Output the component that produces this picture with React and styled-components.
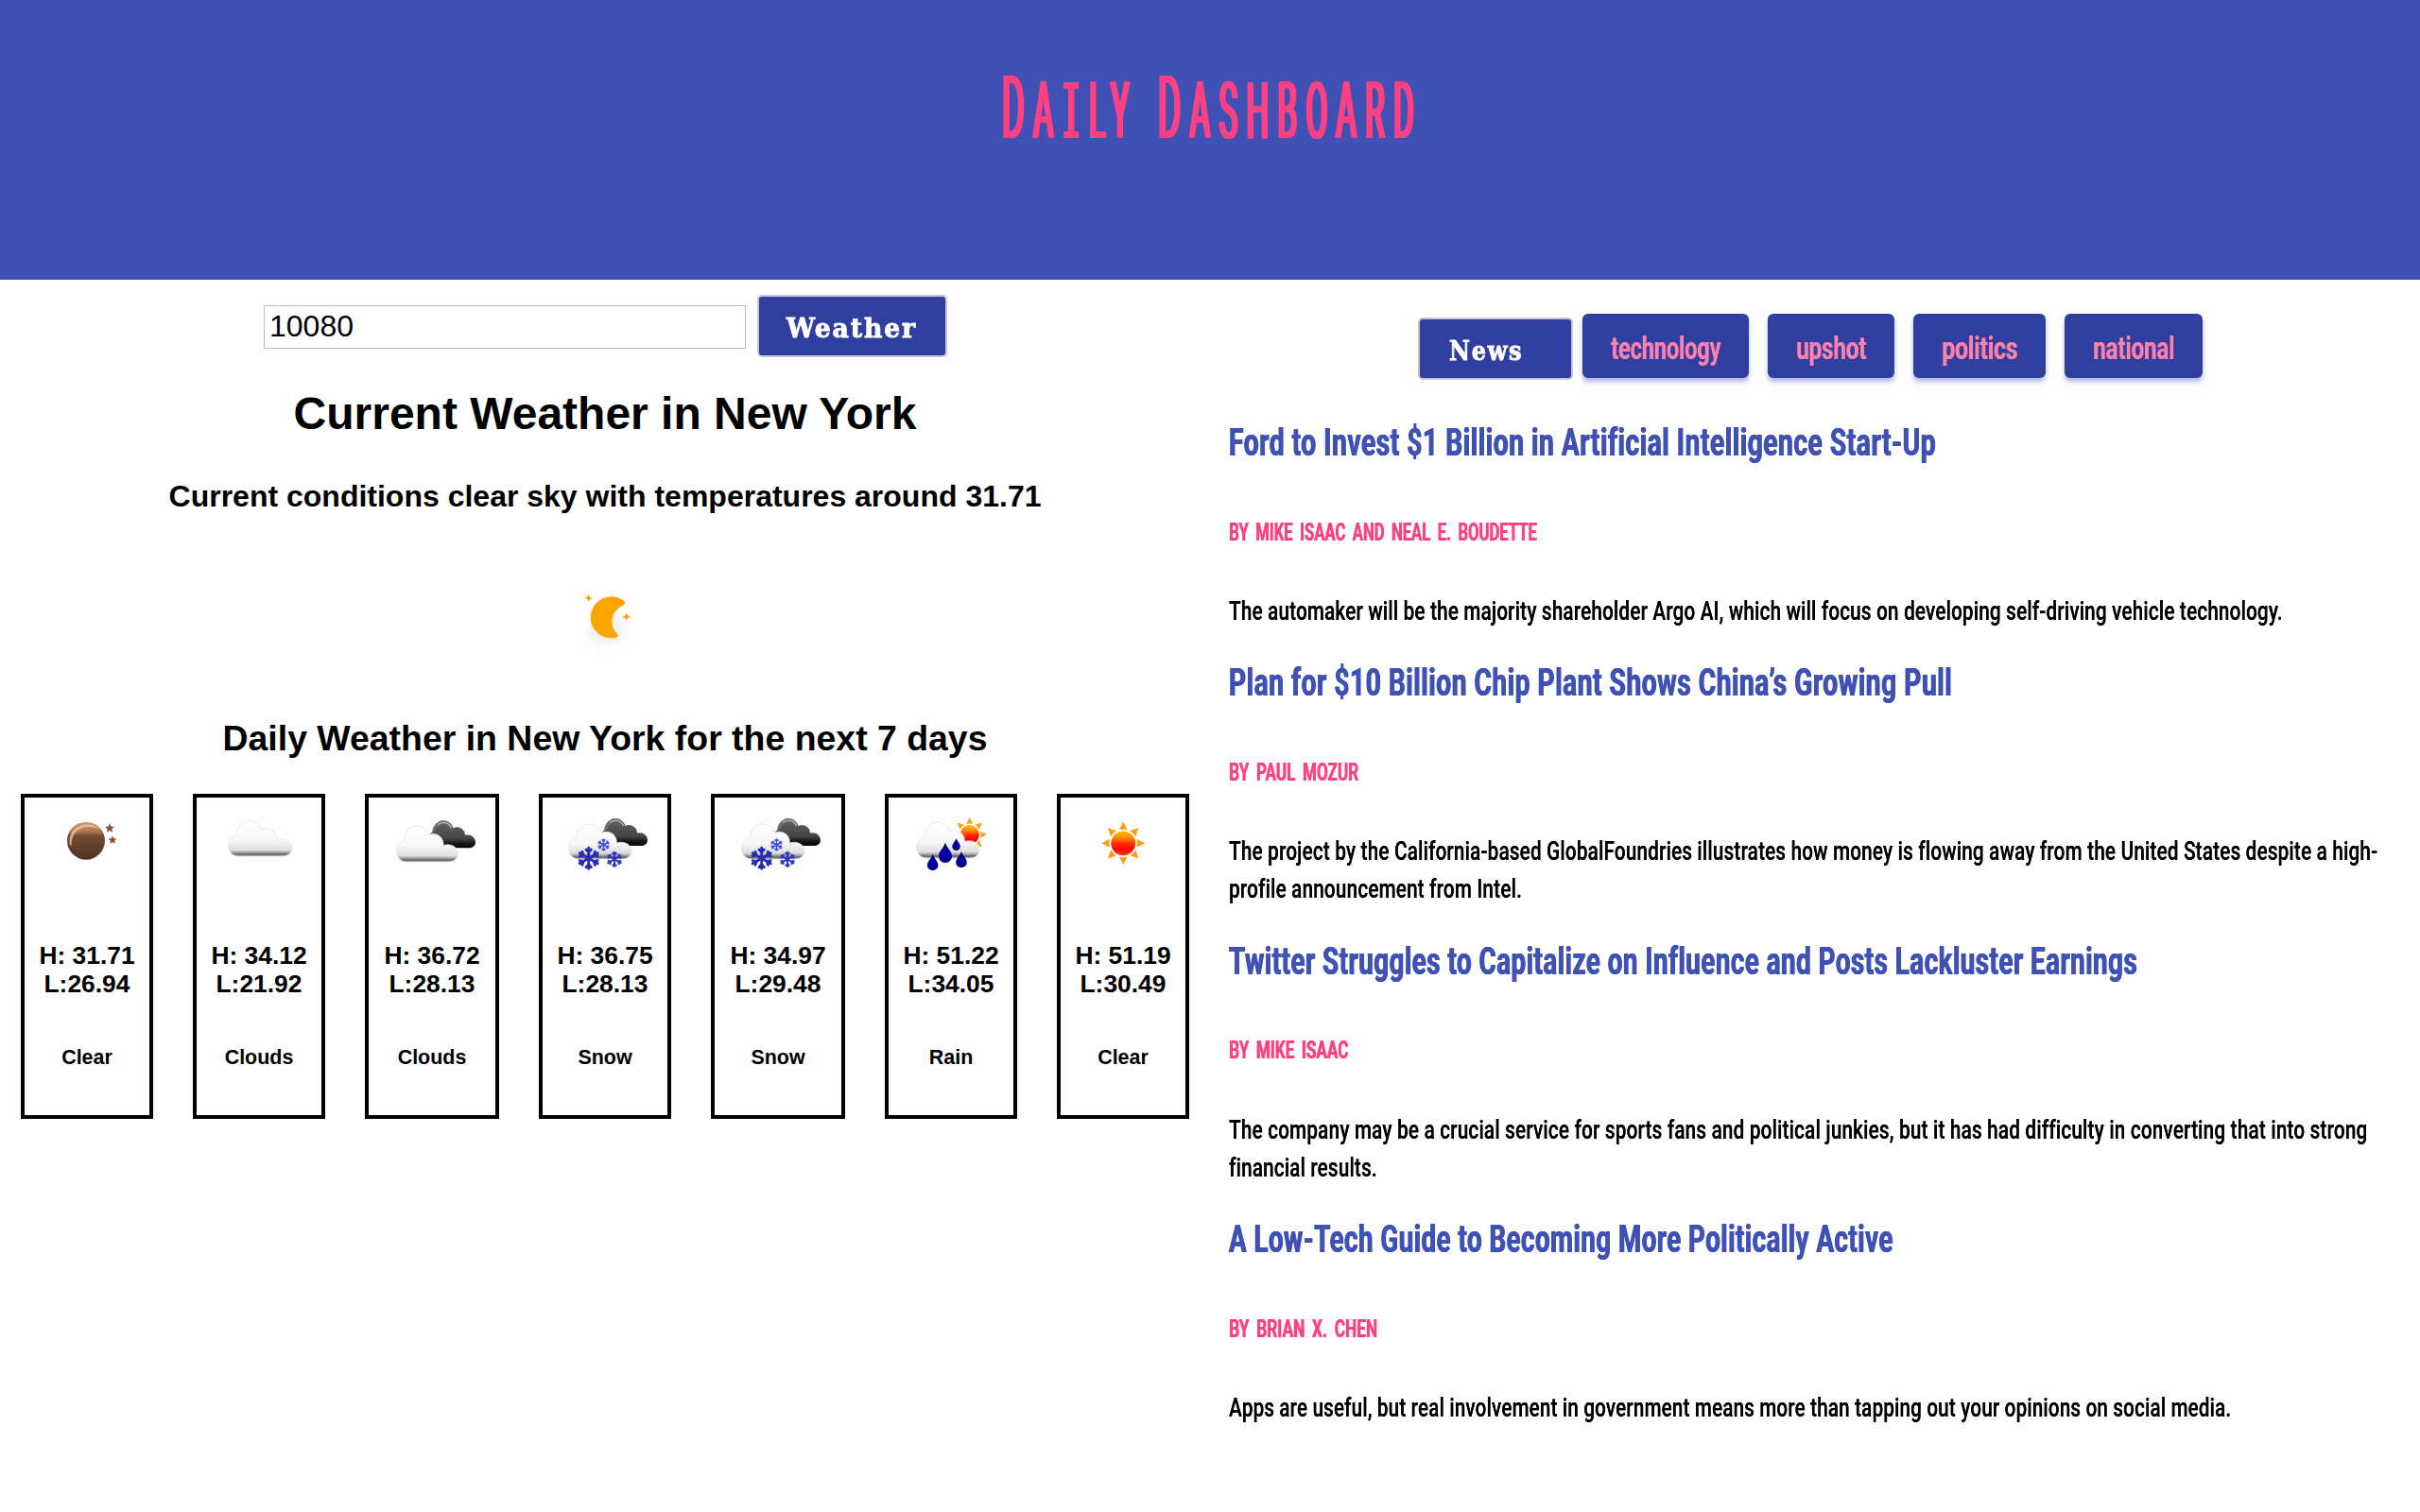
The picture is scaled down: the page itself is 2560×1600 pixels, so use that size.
import React, { useLayoutEffect, useRef, useState } from "react";
import styled, { createGlobalStyle } from "styled-components";

const GlobalStyle = createGlobalStyle`
  * { box-sizing: border-box; }
  body {
    margin: 0;
    background: #fefefe;
    color: #000;
    font-family: "Liberation Sans", Arial, sans-serif;
  }
  h1, h2, h3, h4, p { margin: 0; }
`;

/* ---- condensed text: squeezes a line to the requested measure ---- */

const FitBox = styled.span`
  display: inline-block;
  white-space: nowrap;
  text-align: left;
  vertical-align: top;
`;

const FitInner = styled.span`
  display: inline-block;
  transform-origin: 0 50%;
`;

function Fit({ width, children }) {
  const ref = useRef(null);
  const [scale, setScale] = useState(1);
  useLayoutEffect(() => {
    setScale(width / ref.current.offsetWidth);
  }, [width]);
  return (
    <FitBox style={{ width }}>
      <FitInner ref={ref} style={scale === 1 ? undefined : { transform: `scaleX(${scale})` }}>
        {children}
      </FitInner>
    </FitBox>
  );
}

/* ---- header ---- */

const Header = styled.header`
  height: 296px;
  padding-top: 59px;
  background: #3f51b5;
  display: flex;
  justify-content: center;
`;

const Title = styled.h1`
  display: flex;
  gap: 21px;
  padding-left: 5px;
  height: 120px;
  line-height: 112px;
  font-family: Roboto, "Open Sans", sans-serif;
  font-weight: 400;
  font-size: 83px;
  letter-spacing: 24px;
  color: #ff4081;
  text-shadow: 4px 0 #ff4081, -4px 0 #ff4081, 2px 0 #ff4081, -2px 0 #ff4081;
`;

const Initial = styled.span`
  font-size: 93px;
`;

const Slab = styled.span`
  font-family: "DejaVu Sans Mono", monospace;
  font-size: 81px;
`;

/* ---- layout ---- */

const Main = styled.main`
  display: grid;
  grid-template-columns: 1280px 1280px;
`;

const WeatherPane = styled.section`
  display: flex;
  flex-direction: column;
  align-items: center;
`;

const NewsPane = styled.section`
  padding: 36px 20px 0;
  overflow-x: clip;
`;

const SearchForm = styled.form`
  display: flex;
  align-items: center;
  align-self: flex-start;
  gap: 12px;
  height: 66px;
  margin: 16px 0 0 279px;
`;

const ZipInput = styled.input`
  width: 510px;
  height: 46px;
  margin-top: 2px;
  padding: 0 5px 1px;
  border: 1px solid #bdbdbd;
  background: #fff;
  font: 32px "Liberation Sans", Arial, sans-serif;
  color: #000;
  outline: none;
`;

const ActionButton = styled.button`
  width: ${(p) => p.$width}px;
  height: 66px;
  padding: 6px 0 0 ${(p) => p.$inset}px;
  border: 2px solid #c5c5cb;
  border-radius: 5px;
  background: #303f9f;
  color: #fff;
  text-align: left;
  font: bold 28px/40px "DejaVu Serif", serif;
  letter-spacing: 2px;
  -webkit-text-stroke: 0.9px #fff;
`;

const CurrentHeading = styled.h1`
  margin-top: 32px;
  font-size: 48px;
  line-height: 56px;
`;

const Conditions = styled.h3`
  margin: 41px 0 57px;
  font-size: 32px;
  line-height: 36px;
`;

const DailyHeading = styled.h2`
  margin: 39px 0 37px;
  font-size: 37.44px;
  line-height: 44px;
`;

const Days = styled.div`
  display: grid;
  grid-template-columns: 140px 140px 142px 140px 142px 140px 140px;
  gap: 42px;
`;

const DayCard = styled.div`
  height: 344px;
  border: 4px solid #000;
  display: flex;
  flex-direction: column;
  align-items: center;
`;

const Temps = styled.div`
  margin-top: 32px;
  font-weight: bold;
  font-size: 26.4px;
  line-height: 30px;
  text-align: center;
  white-space: nowrap;
`;

const Label = styled.div`
  margin-top: 51px;
  font-weight: bold;
  font-size: 21.44px;
  line-height: 24px;
`;

/* ---- news ---- */

const NewsBar = styled.nav`
  display: flex;
  align-items: flex-start;
  margin-left: 200px;
  height: 106px;
`;

const NewsButton = styled(ActionButton)`
  margin: 4px 10px 0 0;
`;

const Tab = styled.button`
  height: 68px;
  margin-right: 20px;
  padding: 5px 30px 0;
  border: 0;
  border-radius: 6px;
  background: #303f9f;
  box-shadow: 0 4px 5px rgba(63, 81, 181, 0.4);
  color: #ff80ab;
  font: 600 33px/56px Roboto, sans-serif;
  text-shadow: 0.9px 0 #ff80ab;
`;

const Article = styled.article`
  margin-bottom: 25.6px;
`;

const Headline = styled.h2`
  height: 60px;
  font: 700 41.5px/60px Roboto, sans-serif;
  letter-spacing: 0.8px;
  color: #3f51b5;
  text-shadow: 0.7px 0 #3f51b5, -0.7px 0 #3f51b5;
`;

const Byline = styled.h4`
  height: 30px;
  margin: 50.5px 0 48.3px;
  font: 700 25.2px/30px Roboto, sans-serif;
  word-spacing: 5px;
  color: #ff4081;
  text-shadow: 0.8px 0 #ff4081;
`;

const Abstract = styled.p`
  font: 500 28.5px/40px Roboto, sans-serif;
  letter-spacing: 0.3px;
  text-shadow: 0.3px 0 #000;
`;

const Line = styled.span`
  display: block;
  height: 40px;
`;

/* ---- icons ---- */

function Defs() {
  return (
    <svg width="0" height="0" style={{ display: "block" }}>
      <defs>
        <linearGradient id="white" x1="0" y1="0" x2="0" y2="1">
          <stop offset="0" stopColor="#fff" />
          <stop offset="0.55" stopColor="#f7f7f7" />
          <stop offset="0.83" stopColor="#dedede" />
          <stop offset="0.9" stopColor="#a0a0a0" />
          <stop offset="0.95" stopColor="#666" />
          <stop offset="1" stopColor="#999" />
        </linearGradient>
        <linearGradient id="dark" x1="0" y1="0" x2="0" y2="1">
          <stop offset="0" stopColor="#666" />
          <stop offset="0.65" stopColor="#444" />
          <stop offset="0.85" stopColor="#151515" />
          <stop offset="1" stopColor="#000" />
        </linearGradient>
        <linearGradient id="brown" x1="0" y1="0" x2="0" y2="1">
          <stop offset="0" stopColor="#d69a72" />
          <stop offset="0.28" stopColor="#a86f4a" />
          <stop offset="0.36" stopColor="#714a31" />
          <stop offset="1" stopColor="#4f3424" />
        </linearGradient>
        <linearGradient id="sun" x1="0" y1="0" x2="0" y2="1">
          <stop offset="0" stopColor="#ffc400" />
          <stop offset="0.28" stopColor="#ff8a00" />
          <stop offset="0.5" stopColor="#ff3000" />
          <stop offset="0.75" stopColor="#fa0404" />
          <stop offset="1" stopColor="#ff3c14" />
        </linearGradient>
        <linearGradient id="drop" x1="0" y1="0" x2="0" y2="1">
          <stop offset="0" stopColor="#000050" />
          <stop offset="0.6" stopColor="#0000b8" />
          <stop offset="1" stopColor="#000060" />
        </linearGradient>
        <filter id="soft" x="-20%" y="-20%" width="140%" height="140%">
          <feGaussianBlur stdDeviation="0.5" />
        </filter>
        <filter id="haze" x="-60%" y="-60%" width="220%" height="220%">
          <feGaussianBlur stdDeviation="18" />
        </filter>
      </defs>
    </svg>
  );
}

/* cloud outline on a 68 x 38 grid */
const CLOUD =
  "M11 38 C4 38 0 33 0 27 C0 20 4 16 9.500 15.500 C8 7 14 0 22.500 0 C29 0 34 4 36 9.500 C40 7.500 48 8 51 15 C52 17 52 19 52 20.500 C60 18 68 22 68 29 C68 34 64 38 58 38 Z";

function Cloud({ x, y, w, h }) {
  return (
    <g transform={`translate(${x} ${y}) scale(${w / 68} ${h / 38})`}>
      <path d={CLOUD} fill="url(#white)" stroke="#e2e2e2" strokeWidth="0.7" />
    </g>
  );
}

function DarkCloud({ x, y }) {
  return (
    <g transform={`translate(${x} ${y})`}>
      <path
        d="M2 17 C-1 8 6 0 13 0 C18 0 22 3 23.500 8 C29 5 36 9 36 15.500 C42 14 47 18 47 23 C47 27 43.500 29 40 29 L10 29 Z"
        fill="url(#dark)"
      />
      <path d="M0 14 C4 13 3 3 13 2.200 C17 2 20 4.500 21.500 8" fill="none" stroke="#b4b4b4" strokeWidth="1.600" />
      <path d="M-1 15 C4 13 4 7 7 4" fill="none" stroke="#666" strokeWidth="1.600" />
    </g>
  );
}

function Flake({ x, y, r, color = "#262cb4" }) {
  return (
    <g
      transform={`translate(${x} ${y}) scale(${r / 12})`}
      fill="none"
      stroke={color}
      strokeWidth="2.700"
      strokeLinecap="round"
      strokeLinejoin="round"
    >
      {[0, 60, 120, 180, 240, 300].map((a) => (
        <path key={a} transform={`rotate(${a})`} d="M0 0 L0 -10.600 M-2.600 -9 L0 -6.200 L2.600 -9" />
      ))}
    </g>
  );
}

function Drop({ x, y, w, h }) {
  return (
    <path
      transform={`translate(${x} ${y}) scale(${w / 14} ${h / 21})`}
      d="M0 0 C1.500 5.500 7 9 7 14.200 C7 18.200 4 21 0 21 C-4 21 -7 18.200 -7 14.200 C-7 9 -1.500 5.500 0 0 Z"
      fill="url(#drop)"
    />
  );
}

function Sun({ x, y, r }) {
  return (
    <g transform={`translate(${x} ${y}) scale(${r / 22.500})`}>
      {[0, 45, 90, 135, 180, 225, 270, 315].map((a) => (
        <path key={a} transform={`rotate(${a})`} d="M0 -22.800 L4.300 -14 Q0 -15.500 -4.300 -14 Z" fill="#ff9e18" />
      ))}
      <circle r="12.800" fill="url(#sun)" />
    </g>
  );
}

function Star({ x, y, r }) {
  const pts = Array.from({ length: 10 }, (_, i) => {
    const a = (-90 + i * 36) * (Math.PI / 180);
    const d = i % 2 ? r * 0.48 : r;
    return `${x + d * Math.cos(a)},${y + d * Math.sin(a)}`;
  }).join(" ");
  return <polygon points={pts} fill="#80543c" />;
}

const icons = {
  moon: (
    <>
      <circle cx="65" cy="45.700" r="20" fill="url(#brown)" />
      <path d="M47.800 50 C46 36 55 28.500 66 28.500 C72 28.500 76 30 79 33 C72 30.500 65 30.500 60 32.500 C52 36 50 42 49.500 51 Z" fill="#efc9b0" opacity="0.75" />
      <Star x={90} y={32.500} r={5.200} />
      <Star x={93} y={45} r={4.600} />
    </>
  ),
  cloud: <Cloud x={33.700} y={24.500} w={67.300} h={37.500} />,
  clouds: (
    <>
      <DarkCloud x={65} y={24.300} />
      <Cloud x={28.700} y={30} w={64.600} h={38} />
    </>
  ),
  snow: (
    <>
      <DarkCloud x={64} y={22} />
      <Cloud x={27.600} y={28} w={66.400} h={37} />
      <Flake x={48.700} y={64.300} r={12.500} />
      <Flake x={64.500} y={50} r={6.800} color="#4350dc" />
      <Flake x={76} y={65.300} r={8.700} color="#3038be" />
    </>
  ),
  rain: (
    <>
      <Sun x={85.700} y={39.300} r={18} />
      <Cloud x={29.700} y={26} w={66.300} h={38} />
      <Drop x={60} y={47.500} w={14} h={21.500} />
      <Drop x={71.600} y={43} w={8.500} h={13} />
      <Drop x={46.700} y={60} w={11.500} h={17} />
      <Drop x={77} y={57} w={11.500} h={17} />
    </>
  ),
  sun: <Sun x={66.200} y={48.300} r={22.700} />,
};

const DayIcon = styled.svg`
  display: block;
  flex: none;
  width: 132px;
  height: 120px;
`;

const MoonIcon = styled.svg`
  display: block;
  width: 120px;
  height: 120px;
`;

function BigMoon() {
  return (
    <MoonIcon viewBox="0 0 360 360">
      <ellipse cx="185" cy="195" rx="55" ry="50" fill="#000" opacity="0.06" filter="url(#haze)" />
      <g fill="#ffa500">
        <path d="M241 108 A66 66 0 1 0 216 224 Q223 222 221 215 Q202 198 202 168 Q205 138 238 121 Q247 115 241 108 Z" />
        <path d="M128 86 Q130 96 140 98 Q130 100 128 111 Q126 100 116 98 Q126 96 128 86 Z" />
        <path d="M248 145 Q250 156 261 158 Q250 160 248 171 Q246 160 235 158 Q246 156 248 145 Z" />
      </g>
    </MoonIcon>
  );
}

/* ---- data ---- */

const days = [
  { icon: "moon", high: "31.71", low: "26.94", label: "Clear" },
  { icon: "cloud", high: "34.12", low: "21.92", label: "Clouds" },
  { icon: "clouds", high: "36.72", low: "28.13", label: "Clouds" },
  { icon: "snow", high: "36.75", low: "28.13", label: "Snow" },
  { icon: "snow", high: "34.97", low: "29.48", label: "Snow" },
  { icon: "rain", high: "51.22", low: "34.05", label: "Rain" },
  { icon: "sun", high: "51.19", low: "30.49", label: "Clear" },
];

const tabs = [
  ["technology", 116],
  ["upshot", 74],
  ["politics", 80],
  ["national", 86],
];

const articles = [
  {
    title: ["Ford to Invest $1 Billion in Artificial Intelligence Start-Up", 748],
    by: ["BY MIKE ISAAC AND NEAL E. BOUDETTE", 326],
    lines: [["The automaker will be the majority shareholder Argo AI, which will focus on developing self-driving vehicle technology.", 1115]],
  },
  {
    title: ["Plan for $10 Billion Chip Plant Shows China’s Growing Pull", 765],
    by: ["BY PAUL MOZUR", 137],
    lines: [
      ["The project by the California-based GlobalFoundries illustrates how money is flowing away from the United States despite a high-", 1215],
      ["profile announcement from Intel.", 310],
    ],
  },
  {
    title: ["Twitter Struggles to Capitalize on Influence and Posts Lackluster Earnings", 961],
    by: ["BY MIKE ISAAC", 126],
    lines: [
      ["The company may be a crucial service for sports fans and political junkies, but it has had difficulty in converting that into strong", 1204],
      ["financial results.", 157],
    ],
  },
  {
    title: ["A Low-Tech Guide to Becoming More Politically Active", 703],
    by: ["BY BRIAN X. CHEN", 157],
    lines: [["Apps are useful, but real involvement in government means more than tapping out your opinions on social media.", 1060]],
  },
];

export default function App() {
  return (
    <>
      <GlobalStyle />
      <Defs />
      <Header>
        <Title>
          <Fit width={144}>
            <Initial>D</Initial>A<Slab>I</Slab>LY
          </Fit>
          <Fit width={280}>
            <Initial>D</Initial>ASHBOARD
          </Fit>
        </Title>
      </Header>
      <Main>
        <WeatherPane>
          <SearchForm onSubmit={(e) => e.preventDefault()}>
            <ZipInput defaultValue="10080" />
            <ActionButton $width={201} $inset={29}>
              <Fit width={138}>Weather</Fit>
            </ActionButton>
          </SearchForm>
          <CurrentHeading>Current Weather in New York</CurrentHeading>
          <Conditions>Current conditions clear sky with temperatures around 31.71</Conditions>
          <BigMoon />
          <DailyHeading>Daily Weather in New York for the next 7 days</DailyHeading>
          <Days>
            {days.map((d, i) => (
              <DayCard key={i}>
                <DayIcon viewBox="0 0 132 120">
                  <g filter="url(#soft)">{icons[d.icon]}</g>
                </DayIcon>
                <Temps>
                  <div>H: {d.high}</div>
                  <div>L:{d.low}</div>
                </Temps>
                <Label>{d.label}</Label>
              </DayCard>
            ))}
          </Days>
        </WeatherPane>
        <NewsPane>
          <NewsBar>
            <NewsButton $width={164} $inset={31}>
              <Fit width={78}>News</Fit>
            </NewsButton>
            {tabs.map(([name, width]) => (
              <Tab key={name}>
                <Fit width={width}>{name}</Fit>
              </Tab>
            ))}
          </NewsBar>
          {articles.map(({ title, by, lines }) => (
            <Article key={title[0]}>
              <Headline>
                <Fit width={title[1]}>{title[0]}</Fit>
              </Headline>
              <Byline>
                <Fit width={by[1]}>{by[0]}</Fit>
              </Byline>
              <Abstract>
                {lines.map(([text, width]) => (
                  <Line key={text}>
                    <Fit width={width}>{text}</Fit>
                  </Line>
                ))}
              </Abstract>
            </Article>
          ))}
        </NewsPane>
      </Main>
    </>
  );
}
